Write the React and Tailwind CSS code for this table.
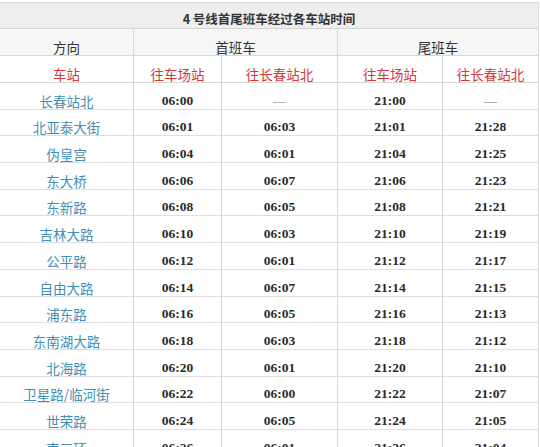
const rows = [
  ["长春站北", "06:00", "—", "21:00", "—"],
  ["北亚泰大街", "06:01", "06:03", "21:01", "21:28"],
  ["伪皇宫", "06:04", "06:01", "21:04", "21:25"],
  ["东大桥", "06:06", "06:07", "21:06", "21:23"],
  ["东新路", "06:08", "06:05", "21:08", "21:21"],
  ["吉林大路", "06:10", "06:03", "21:10", "21:19"],
  ["公平路", "06:12", "06:01", "21:12", "21:17"],
  ["自由大路", "06:14", "06:07", "21:14", "21:15"],
  ["浦东路", "06:16", "06:05", "21:16", "21:13"],
  ["东南湖大路", "06:18", "06:03", "21:18", "21:12"],
  ["北海路", "06:20", "06:01", "21:20", "21:10"],
  ["卫星路/临河街", "06:22", "06:00", "21:22", "21:07"],
  ["世荣路", "06:24", "06:05", "21:24", "21:05"],
  ["南三环", "06:26", "06:01", "21:26", "21:04"],
];

const cjk = { fontFamily: '"Noto Sans CJK SC", "Noto Sans", sans-serif' };
const serif = { fontFamily: '"Liberation Serif", "Noto Sans CJK SC", serif' };

const cols = "grid grid-cols-[134px_88px_116px_105px_1fr]";

function Cell({ children, className = "", last = false, style }) {
  return (
    <div
      className={`flex items-end justify-center leading-[16px] ${last ? "" : "border-r border-[#d8d8d8]"} ${className}`}
      style={style}
    >
      {children}
    </div>
  );
}

export default function App() {
  return (
    <div className="w-[540px] h-[447px] overflow-hidden bg-white pt-[2px]">
      <div className="w-[539px] border-r border-[#dcdcdc]">
        <div
          className="h-[27px] flex items-end justify-center border-y border-[#d4d4d4] bg-[#eeeeee] text-[12.5px] font-bold text-[#333] leading-[16px] pb-[1px]"
          style={cjk}
        >
          4 号线首尾班车经过各车站时间
        </div>

        <div className="h-[27px] flex border-b border-[#d8d8d8] bg-[#f6f6f6] text-[13.5px] text-[#333]" style={cjk}>
          <Cell className="w-[134px]">方向</Cell>
          <Cell className="w-[204px]">首班车</Cell>
          <Cell className="flex-1" last>尾班车</Cell>
        </div>

        <div className={`${cols} h-[27px] border-b border-[#d8d8d8] text-[13.5px] text-[#d4363b]`} style={cjk}>
          <Cell>车站</Cell>
          <Cell>往车场站</Cell>
          <Cell>往长春站北</Cell>
          <Cell>往车场站</Cell>
          <Cell last>往长春站北</Cell>
        </div>

        {rows.map((r) => (
          <div key={r[0]} className={`${cols} h-[26.7px] border-b border-[#dedede]`}>
            <Cell className="text-[13.5px] text-[#3f8fb6]" style={cjk}>{r[0]}</Cell>
            {r.slice(1).map((t, i) => (
              <Cell
                key={i}
                last={i === 3}
                className={t === "—" ? "text-[13px] text-[#777]" : "text-[13.5px] font-bold text-[#2a2a2a]"}
                style={serif}
              >
                {t}
              </Cell>
            ))}
          </div>
        ))}
      </div>
    </div>
  );
}
